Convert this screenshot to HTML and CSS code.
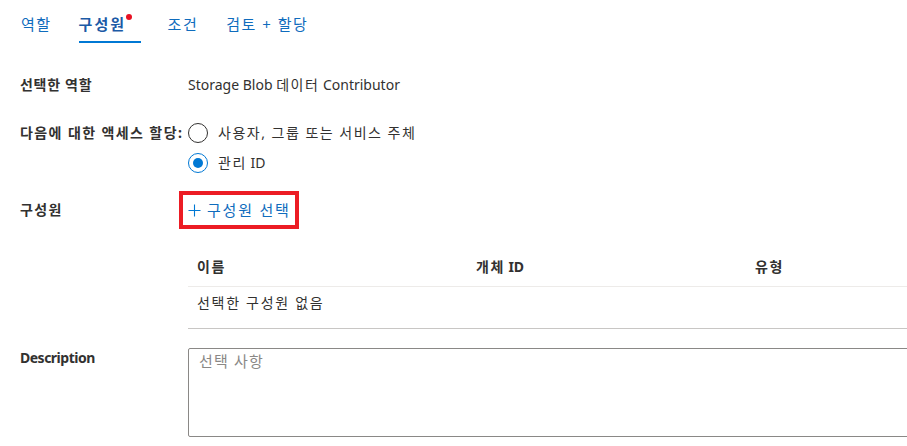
FILE: index.html
```html
<!DOCTYPE html>
<html lang="ko">
<head>
<meta charset="utf-8">
<link rel="stylesheet" href="styles.css">
</head>
<body>
<nav class="tabs">
  <div class="tab">역할</div>
  <div class="tab active">구성원<span class="dot"></span></div>
  <div class="tab">조건</div>
  <div class="tab">검토 + 할당</div>
</nav>

<main class="form">
  <div class="row row-role">
    <div class="label">선택한 역할</div>
    <div class="value">Storage Blob <span class="ko">데이터</span> Contributor</div>
  </div>

  <div class="row row-assign">
    <div class="label wide">다음에 대한 액세스 할당:</div>
    <div class="radios">
      <div class="radio"><span class="circle"></span><span class="ko">사용자, 그룹 또는 서비스 주체</span></div>
      <div class="radio checked"><span class="circle"></span><span><span class="ko">관리</span> ID</span></div>
    </div>
  </div>

  <div class="row row-members">
    <div class="label wide">구성원</div>
    <div class="select-box">
      <svg class="plus" width="13" height="13" viewBox="0 0 13 13"><path d="M6.5 0.5v12M0.5 6.5h12" stroke="#0078d4" stroke-width="1.1" fill="none"/></svg>
      <span class="btn-text">구성원 선택</span>
    </div>
  </div>

  <div class="table">
    <div class="thead">
      <div class="cell ko">이름</div>
      <div class="cell"><span class="ko">개체</span> ID</div>
      <div class="cell ko">유형</div>
    </div>
    <div class="tbody">
      <div class="cell ko empty">선택한 구성원 없음</div>
    </div>
  </div>

  <div class="row row-desc">
    <div class="label desc">Description</div>
    <div class="textarea"><span class="placeholder">선택 사항</span></div>
  </div>
</main>
</body>
</html>
```

FILE: styles.css
```css
html, body {
  margin: 0;
  padding: 0;
  overflow: hidden;
  background: #fff;
}
body {
  width: 907px;
  height: 446px;
  font-family: "Noto Sans", "Noto Sans CJK KR", sans-serif;
  font-size: 14px;
  line-height: 20px;
  color: #323130;
}
.ko {
  letter-spacing: 1.5px;
}
.tabs {
  display: flex;
  height: 44px;
  padding-left: 21px;
  box-sizing: border-box;
}
.tab {
  position: relative;
  box-sizing: border-box;
  height: 44px;
  padding-top: 14px;
  font-size: 15px;
  letter-spacing: 1.5px;
  color: #0f6cbd;
  margin-right: 27px;
  white-space: nowrap;
}
.tab:nth-child(3) {
  margin-right: 28px;
}
.tab.active {
  font-weight: 700;
  color: #1c5aa6;
  width: 62px;
  letter-spacing: 2px;
}
.tab.active::after {
  content: "";
  position: absolute;
  left: 0;
  right: 0;
  bottom: 1px;
  height: 2px;
  background: #0078d4;
}
.dot {
  position: absolute;
  top: 14px;
  left: 47px;
  width: 6px;
  height: 6px;
  border-radius: 50%;
  background: #e81123;
}
.form {
  padding-left: 20px;
  width: 887px;
  overflow: hidden;
}
.row {
  display: flex;
}
.label {
  width: 168px;
  flex: none;
  font-weight: 700;
  white-space: nowrap;
  letter-spacing: 0.7px;
}
.label.wide {
  letter-spacing: 1.4px;
}
.label.desc {
  letter-spacing: -0.5px;
}
.row-role {
  margin-top: 31px;
}
.row-assign {
  margin-top: 28px;
}
.radios {
  display: flex;
  flex-direction: column;
  gap: 10px;
}
.radio {
  display: flex;
  align-items: center;
  gap: 10px;
  height: 20px;
  white-space: nowrap;
}
.circle {
  width: 20px;
  height: 20px;
  flex: none;
  box-sizing: border-box;
  border: 1px solid #323130;
  border-radius: 50%;
  display: flex;
  align-items: center;
  justify-content: center;
}
.radio.checked .circle {
  border-color: #0078d4;
}
.radio.checked .circle::after {
  content: "";
  width: 10px;
  height: 10px;
  border-radius: 50%;
  background: #0078d4;
}
.row-members {
  margin-top: 18px;
  align-items: center;
}
.row-members .label {
  width: 159px;
}
.select-box {
  display: flex;
  align-items: center;
  gap: 6px;
  height: 38px;
  box-sizing: border-box;
  border: 4px solid #ec1c24;
  padding: 0 4px 0 5px;
  color: #0f6cbd;
}
.btn-text {
  font-size: 15px;
  letter-spacing: 1.8px;
}
.table {
  margin-top: 19px;
  margin-left: 168px;
  width: 719px;
}
.thead {
  display: grid;
  grid-template-columns: 279px 279px 161px;
  height: 39px;
  box-sizing: border-box;
  border-bottom: 1px solid #edebe9;
  align-items: center;
  font-weight: 700;
}
.cell {
  padding-left: 9px;
}
.tbody {
  height: 42px;
  box-sizing: border-box;
  padding-top: 6px;
  border-bottom: 1px solid #c8c6c4;
}
.empty {
  letter-spacing: 1.7px;
}
.row-desc {
  margin-top: 19px;
}
.textarea {
  width: 760px;
  flex: none;
  height: 89px;
  box-sizing: border-box;
  border: 1px solid #8a8886;
  border-radius: 2px;
  padding: 2px 10px;
}
.placeholder {
  color: #8a8886;
  font-size: 15px;
  letter-spacing: 1.2px;
}
```
